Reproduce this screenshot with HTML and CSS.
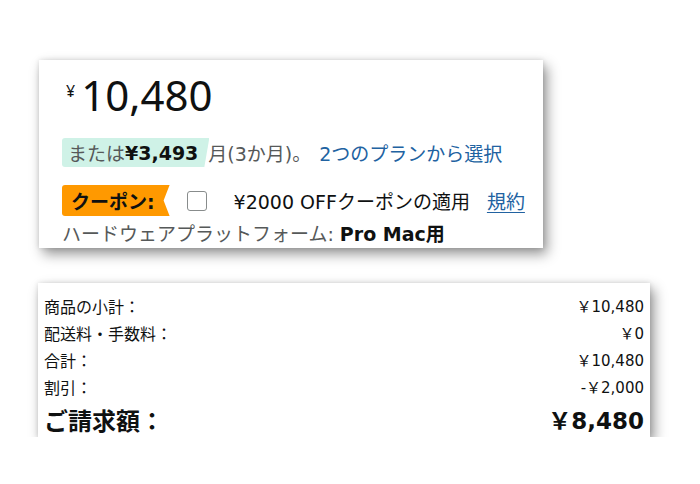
FILE: index.html
```html
<!DOCTYPE html>
<html lang="ja">
<head>
<meta charset="utf-8">
<link rel="stylesheet" href="styles.css">
</head>
<body>
<div class="page">
  <section class="card product">
    <div class="price"><span class="yen">¥</span><span class="amount">10,480</span></div>
    <div class="line plan">
      <span class="mint">または<b>¥3,493</b></span><span class="month">月(3か月)。</span><a class="link">2つのプランから選択</a>
    </div>
    <div class="line coupon">
      <span class="ribbon">クーポン:</span>
      <span class="checkbox"></span>
      <span class="coupon-text">¥2000 OFFクーポンの適用</span>
      <a class="link terms">規約</a>
    </div>
    <div class="line platform">ハードウェアプラットフォーム: <b>Pro Mac用</b></div>
  </section>

  <section class="card summary">
    <div class="row"><span>商品の小計：</span><span class="val">￥10,480</span></div>
    <div class="row"><span>配送料・手数料：</span><span class="val">￥0</span></div>
    <div class="row"><span>合計：</span><span class="val">￥10,480</span></div>
    <div class="row"><span>割引：</span><span class="val">-￥2,000</span></div>
    <div class="row total"><span>ご請求額：</span><span class="val">￥8,480</span></div>
  </section>
</div>
</body>
</html>
```

FILE: styles.css
```css
html, body {
  margin: 0;
  padding: 0;
  background: #ffffff;
}

.page {
  display: flex;
  flex-direction: column;
  align-items: flex-start;
  padding-top: 60px;
}

.card {
  background: #ffffff;
  box-sizing: border-box;
  overflow: hidden;
  box-shadow: 4px 6px 12px rgba(0, 0, 0, 0.42), 0 0 5px rgba(0, 0, 0, 0.12);
}

.product {
  margin-left: 39px;
  width: 504px;
  height: 188px;
  padding: 13px 0 0 23px;
  font-family: "DejaVu Sans", "Noto Sans CJK JP", sans-serif;
  color: #0f1111;
}

.price {
  display: flex;
  align-items: flex-start;
  margin-left: 4px;
  height: 58px;
}

.yen {
  font-family: "Noto Sans", "Noto Sans CJK JP", sans-serif;
  font-size: 16px;
  line-height: 16px;
  margin-top: 10px;
  margin-right: 6px;
}

.amount {
  font-family: "Noto Sans", sans-serif;
  font-size: 42px;
  line-height: 44px;
}

.line {
  display: flex;
  align-items: center;
  white-space: nowrap;
}

.plan {
  font-size: 19px;
  height: 29px;
  margin-top: 7px;
}

.mint {
  display: flex;
  align-items: center;
  height: 29px;
  background: #cff2e7;
  color: #565959;
  padding: 0 11px 0 6px;
  border-radius: 3px 0 0 3px;
  clip-path: polygon(0 0, 100% 0, calc(100% - 5px) 100%, 0 100%);
}

.mint b {
  color: #0f1111;
  font-weight: bold;
}

.month {
  color: #565959;
  margin-left: -1px;
}

.link {
  color: #2162a1;
  text-decoration: none;
}

.plan .link {
  margin-left: 8px;
}

.coupon {
  font-size: 19px;
  height: 31px;
  margin-top: 18px;
}

.ribbon {
  display: flex;
  align-items: center;
  height: 31px;
  background: #ff9900;
  color: #0f1111;
  font-weight: bold;
  padding: 0 15px 0 9px;
  border-radius: 3px 0 0 3px;
  clip-path: polygon(0 0, 100% 0, calc(100% - 6px) 50%, 100% 100%, 0 100%);
}

.checkbox {
  width: 18px;
  height: 18px;
  border: 1.5px solid #888c8c;
  border-radius: 3px;
  margin-left: 17px;
  flex: none;
}

.coupon-text {
  margin-left: 27px;
}

.terms {
  margin-left: 17px;
  text-decoration: underline;
  text-underline-offset: 3px;
}

.platform {
  font-size: 19px;
  color: #565959;
  height: 28px;
  margin-top: 2px;
}

.platform b {
  color: #0f1111;
  margin-left: 6px;
}

.summary {
  margin-left: 38px;
  margin-top: 35px;
  width: 612px;
  height: 154px;
  padding: 9px 6px 0 6px;
  font-family: "DejaVu Sans", "Noto Sans CJK JP", sans-serif;
  color: #0f1111;
}

.row {
  display: flex;
  justify-content: space-between;
  align-items: center;
  font-size: 15px;
  height: 27px;
}

.row span:first-child {
  font-family: "Noto Sans CJK JP", sans-serif;
  font-size: 16px;
}

.row.total {
  font-size: 23px;
  font-weight: bold;
  height: 34px;
  margin-top: 2px;
}

.row.total span:first-child {
  font-size: 24px;
}
```
